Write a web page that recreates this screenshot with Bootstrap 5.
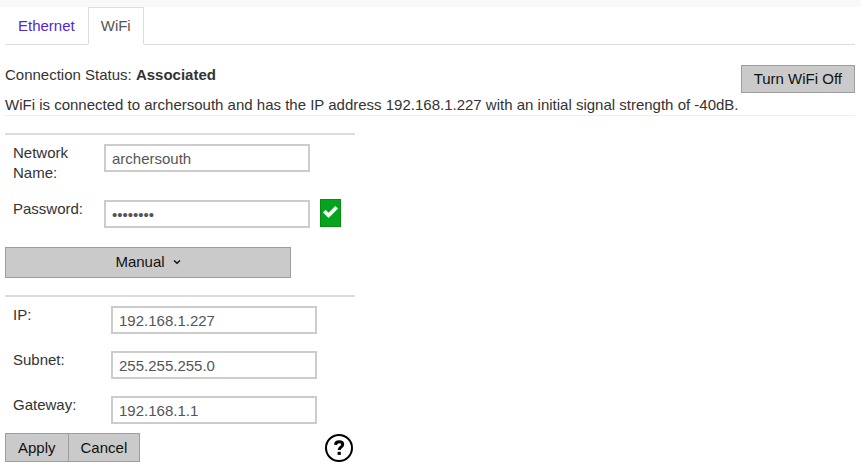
<!DOCTYPE html>
<html lang="en">
<head>
<meta charset="utf-8">
<meta name="viewport" content="width=device-width, initial-scale=1">
<title>Network settings</title>
<link href="https://cdn.jsdelivr.net/npm/bootstrap@5.3.0/dist/css/bootstrap.min.css" rel="stylesheet">
<style>
body { font-family: "Liberation Sans", Arial, sans-serif; font-size: 15px; line-height: 20px; color: #333; }
.top-strip { height: 7px; background: #f9f9f9; }
.page { padding: 0 6px 0 5px; }
.nav-tabs { --bs-nav-tabs-border-color: #ddd; --bs-nav-tabs-border-radius: 0; --bs-nav-tabs-link-active-border-color: #ddd #ddd #fff; --bs-nav-tabs-link-active-color: #555; --bs-nav-link-color: #5227cc; --bs-nav-link-hover-color: #5227cc; --bs-nav-link-padding-x: 12px; --bs-nav-link-padding-y: 8px; }
.nav-tabs .nav-link { font-size: 15px; line-height: 20px; }
.status-bar { border-bottom: 1px solid #eee; padding-top: 20px; margin-bottom: 17px; }
.status-bar p { margin-bottom: 10px; }
.status-bar p:last-child { margin-bottom: 0; }
.btn-plain { --bs-btn-font-size: 15px; --bs-btn-line-height: 20px; --bs-btn-padding-x: 12px; --bs-btn-padding-y: 3px; --bs-btn-border-radius: 0; --bs-btn-bg: #cacaca; --bs-btn-color: #111; --bs-btn-border-color: #9d9d9d; --bs-btn-hover-bg: #bbb; --bs-btn-hover-color: #111; --bs-btn-hover-border-color: #888; }
.settings { max-width: 350px; }
.fields { border-top: 2px solid #ddd; }
.field { padding: 8px; min-height: 45px; }
.field label { width: 91px; flex: none; padding-right: 16px; }
.fields-ip label { width: 98px; }
.field .form-control { width: 206px; height: 28px; margin-top: 1px; padding: 2px 6px; border: 2px solid #ccc; border-radius: 0; font-size: 15px; line-height: 20px; color: #555; }
.btn-check-ok { width: 21px; height: 28px; margin-left: 10px; background: #04a51e; border: 1px solid #078d0d; border-radius: 0; }
.btn-manual { width: 286px; height: 31px; padding-bottom: 5px; margin: 11px 0 17px; }
.actions { padding: 1px 2px 0 0; }
.btn-help { width: 28px; height: 28px; margin-top: 1px; }
</style>
<script src="https://cdn.jsdelivr.net/npm/bootstrap@5.3.0/dist/js/bootstrap.bundle.min.js" defer></script>
</head>
<body>
<div class="top-strip"></div>
<main class="page">
  <ul class="nav nav-tabs">
    <li class="nav-item"><a class="nav-link" href="#ethernet">Ethernet</a></li>
    <li class="nav-item"><a class="nav-link active" aria-current="page" href="#wifi">WiFi</a></li>
  </ul>
  <section class="status-bar d-flex justify-content-between align-items-start">
    <div>
      <p>Connection Status: <strong>Associated</strong></p>
      <p>WiFi is connected to archersouth and has the IP address 192.168.1.227 with an initial signal strength of -40dB.</p>
    </div>
    <button type="button" class="btn btn-plain flex-shrink-0">Turn WiFi Off</button>
  </section>
  <form class="settings">
    <div class="fields">
      <div class="field d-flex align-items-start">
        <label for="network">Network Name:</label>
        <input class="form-control" id="network" type="text" value="archersouth">
      </div>
      <div class="field d-flex align-items-start">
        <label for="password">Password:</label>
        <input class="form-control" id="password" type="password" value="password">
        <button type="button" class="btn btn-check-ok d-flex align-items-center justify-content-center flex-shrink-0 p-0" aria-label="Password accepted">
          <svg width="15" height="15" viewBox="0 0 15 15" aria-hidden="true"><path d="M0 6.5 2.6 3.8l3 3L12.3 0 15 2.6 5.6 12z" fill="#fff"/></svg>
        </button>
      </div>
    </div>
    <button type="button" class="btn btn-plain btn-manual d-flex align-items-center justify-content-center gap-2">Manual
      <svg width="8" height="6" viewBox="0 0 8 6" aria-hidden="true"><path d="M1 1.5 4 4.3 7 1.5" fill="none" stroke="#111" stroke-width="1.5"/></svg>
    </button>
    <div class="fields fields-ip">
      <div class="field d-flex align-items-start">
        <label for="ip">IP:</label>
        <input class="form-control" id="ip" type="text" value="192.168.1.227">
      </div>
      <div class="field d-flex align-items-start">
        <label for="subnet">Subnet:</label>
        <input class="form-control" id="subnet" type="text" value="255.255.255.0">
      </div>
      <div class="field d-flex align-items-start">
        <label for="gateway">Gateway:</label>
        <input class="form-control" id="gateway" type="text" value="192.168.1.1">
      </div>
    </div>
    <div class="actions d-flex justify-content-between">
      <div class="btn-group">
        <button type="submit" class="btn btn-plain">Apply</button>
        <button type="button" class="btn btn-plain">Cancel</button>
      </div>
      <button type="button" class="btn btn-help border-0 p-0 d-flex" aria-label="Help">
        <svg width="28" height="28" viewBox="0 0 28 28" aria-hidden="true"><circle cx="14" cy="14" r="13" fill="none" stroke="#000" stroke-width="2"/><path d="M10.5 10.8c.2-2 1.5-3 3.6-3 2.2 0 3.6 1 3.6 2.7 0 2.6-3.5 2.8-3.5 5.4" fill="none" stroke="#000" stroke-width="3"/><path d="M12.6 17.8h3.2v3.1h-3.2z"/></svg>
      </button>
    </div>
  </form>
</main>
</body>
</html>
